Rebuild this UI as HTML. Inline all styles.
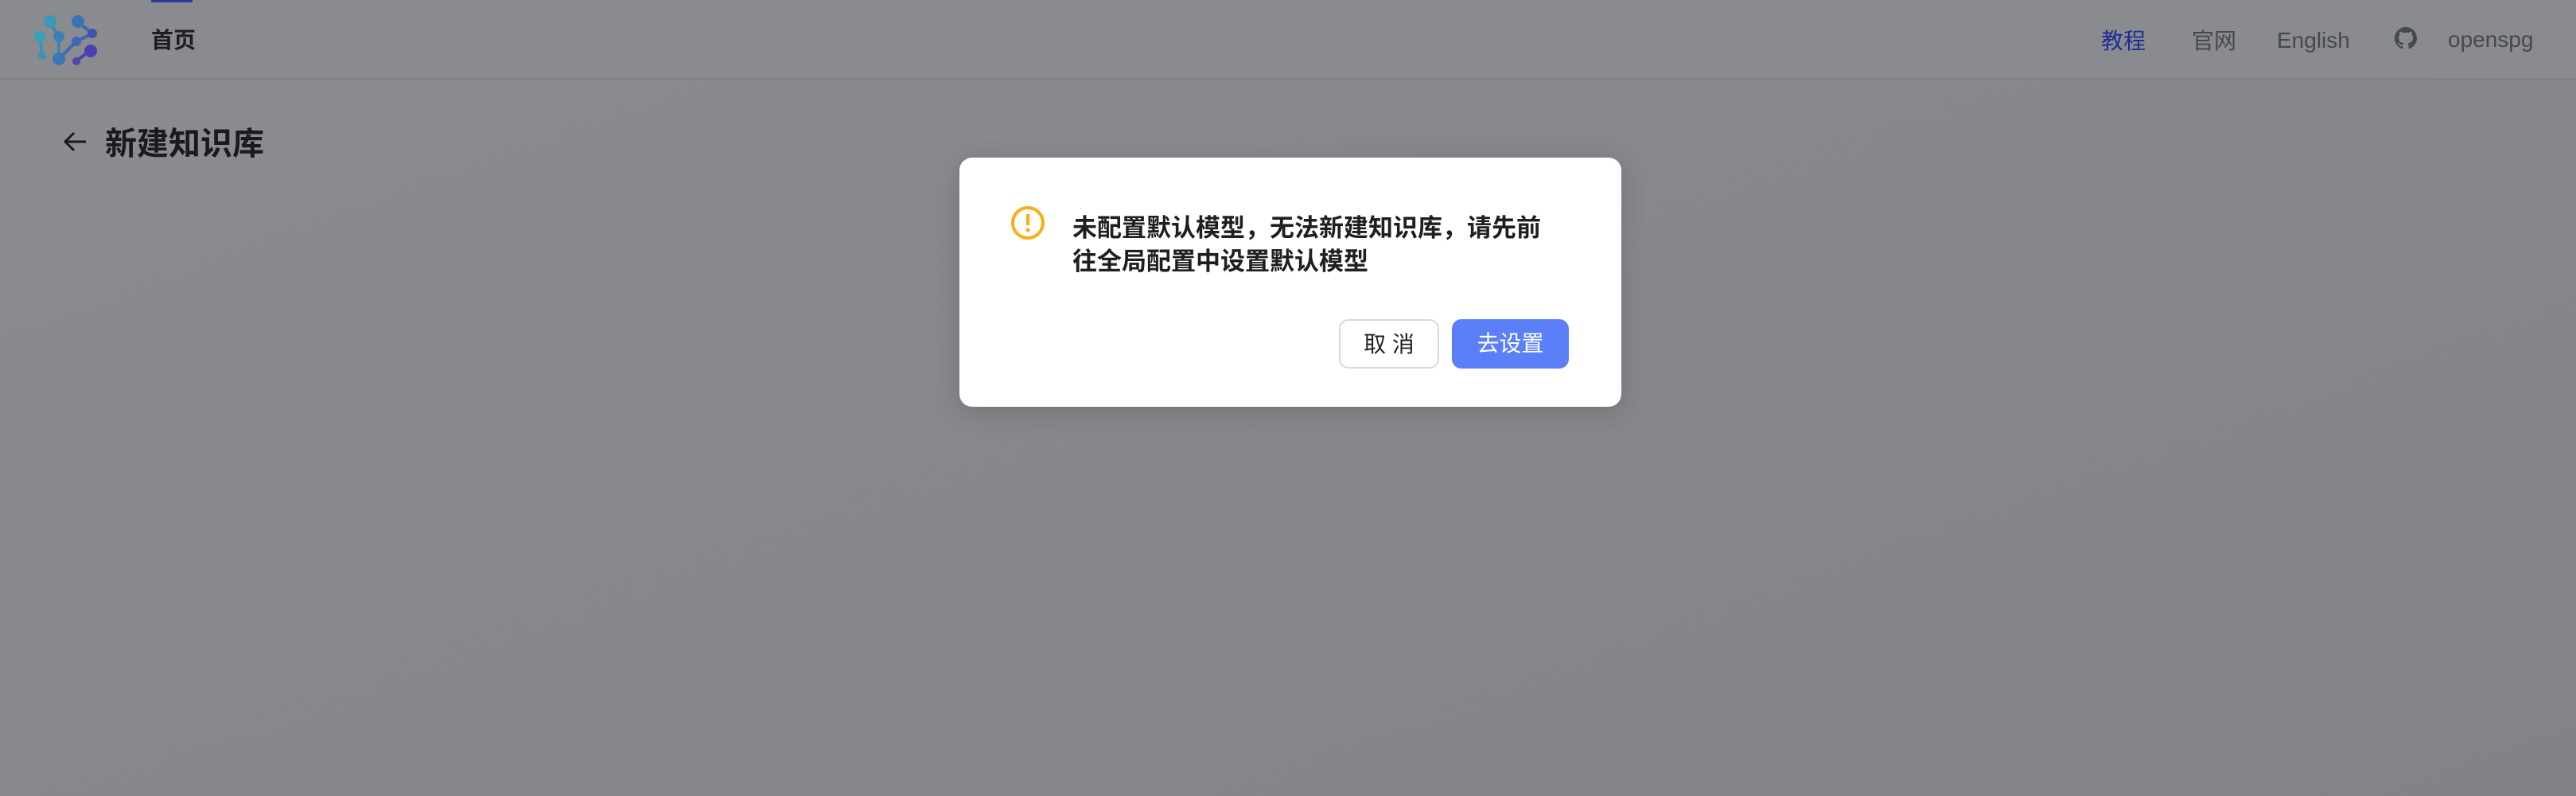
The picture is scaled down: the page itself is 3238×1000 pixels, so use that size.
<!DOCTYPE html>
<html><head><meta charset="utf-8"><style>
*{margin:0;padding:0;box-sizing:border-box}
body{width:3238px;height:1000px;overflow:hidden;font-family:"Liberation Sans","Noto Sans CJK SC",sans-serif;background:linear-gradient(160deg,#8b8d91 0%,#86888c 40%,#818387 100%);position:relative}
.hdr{position:absolute;left:0;top:0;width:3238px;height:100px;border-bottom:2px solid #7e8084;background:#898b8f}
.abs{position:absolute;white-space:nowrap}
.nav{font-size:28px;color:#45484d;line-height:40px}
.modal{position:absolute;left:1206px;top:198px;width:832px;height:313px;background:#fff;border-radius:16px;box-shadow:0 6px 30px rgba(0,0,0,.15)}
.btn{position:absolute;top:203px;height:62px;border-radius:12px;font-size:28px;line-height:60px;text-align:center}
</style></head><body>
<div class="hdr"></div>
<div class="abs" style="left:190px;top:0;width:52px;height:3px;background:#2c3c9c"></div>
<svg class="abs" style="left:40px;top:14px" width="90" height="72" viewBox="0 0 90 72">
<g stroke-width="4" fill="none"><path d="M23 14 L34 32 L34 60" stroke="#3a86b4"/><path d="M10 33 L13 55" stroke="#3a95b4"/><path d="M34 60 L56 38 L76 28" stroke="#3b6ab0"/><path d="M57 13 L76 28" stroke="#3b6ab0"/><path d="M56 63 L72 50" stroke="#4646b0"/></g>
<circle cx="23" cy="13" r="8" fill="#3b98b8"/><circle cx="10" cy="32" r="7" fill="#3aa0b8"/><circle cx="13" cy="56" r="5" fill="#3a94b4"/><circle cx="34" cy="32" r="7" fill="#3a80b4"/><circle cx="34" cy="60" r="8" fill="#3a78b4"/><circle cx="56" cy="38" r="6" fill="#3a68b2"/><circle cx="58" cy="13" r="8" fill="#3a72b4"/><circle cx="76" cy="28" r="6" fill="#4450b0"/><circle cx="56" cy="63" r="5" fill="#4a48b0"/><circle cx="74" cy="50" r="8" fill="#4a40b0"/></svg>
<div class="abs" style="left:190px;top:29px;font-size:28px;font-weight:bold;color:#1c1d20">首页</div>
<div class="abs nav" style="left:2641px;top:32px;color:#1f2d93">教程</div>
<div class="abs nav" style="left:2755px;top:32px">官网</div>
<div class="abs nav" style="left:2862px;top:31px">English</div>
<svg class="abs" style="left:3010px;top:34px" width="28" height="28" viewBox="0 0 16 16"><path fill="#45484d" d="M8 0C3.58 0 0 3.58 0 8c0 3.540 2.290 6.530 5.470 7.590.4.07.55-.17.55-.38 0-.19-.01-.82-.01-1.49-2.01.37-2.530-.49-2.690-.94-.09-.23-.48-.94-.82-1.130-.28-.15-.68-.52-.01-.53.63-.01 1.08.58 1.23.82.72 1.21 1.87.87 2.33.66.07-.52.28-.87.51-1.070-1.78-.2-3.640-.89-3.640-3.95 0-.87.31-1.59.82-2.15-.08-.2-.36-1.02.08-2.12 0 0 .67-.21 2.2.82.64-.18 1.32-.27 2-.27.68 0 1.36.09 2 .27 1.53-1.04 2.2-.82 2.2-.82.44 1.1.16 1.92.08 2.12.51.56.82 1.27.82 2.15 0 3.070-1.87 3.750-3.65 3.950.29.25.54.73.54 1.48 0 1.07-.01 1.93-.01 2.2 0 .21.15.46.55.38A8.013 8.013 0 0016 8c0-4.42-3.58-8-8-8z"/></svg>
<div class="abs nav" style="left:3077px;top:30px">openspg</div>
<svg class="abs" style="left:78px;top:162px" width="32" height="32" viewBox="0 0 32 32"><path d="M30 16H4M15 5L4 16l11 11" stroke="#1a1b1e" stroke-width="3" fill="none"/></svg>
<div class="abs" style="left:132px;top:148px;font-size:40px;font-weight:bold;color:#1a1b1e">新建知识库</div>
<div class="modal">
<svg class="abs" style="left:64px;top:60px" width="44" height="44" viewBox="0 0 44 44"><circle cx="22" cy="22" r="19" stroke="#faad14" stroke-width="4" fill="none"/><path d="M22 11v14" stroke="#faad14" stroke-width="4"/><circle cx="22" cy="31" r="2.5" fill="#faad14"/></svg>
<div class="abs" style="left:142px;top:68px;font-size:31px;line-height:42px;font-weight:bold;color:#1f1f1f;white-space:normal;width:610px">未配置默认模型，无法新建知识库，请先前往全局配置中设置默认模型</div>
<div class="btn" style="left:477px;width:126px;border:2px solid #d9d9d9;color:#1f1f1f;background:#fff">取 消</div>
<div class="btn" style="left:619px;width:147px;background:#5b7ff6;color:#fff;line-height:62px">去设置</div>
</div>
</body></html>
